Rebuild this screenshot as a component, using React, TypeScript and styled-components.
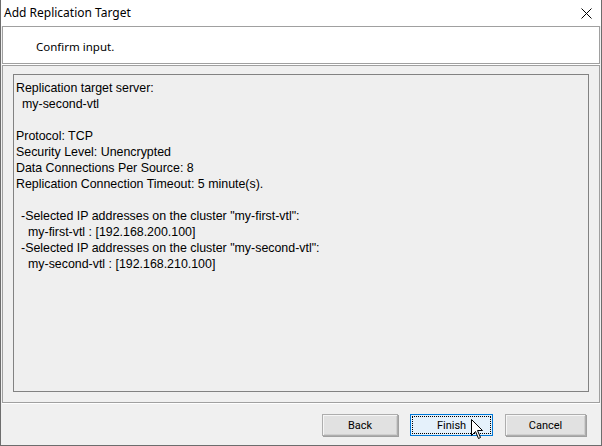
import { createGlobalStyle } from "styled-components";
import styled from "styled-components";

const GlobalStyle = createGlobalStyle`
  html, body {
    margin: 0;
    padding: 0;
    background: #ffffff;
  }
`;

const Window = styled.div`
  position: relative;
  width: 602px;
  height: 446px;
  box-sizing: border-box;
  border-left: 1px solid #6d6d6d;
  border-right: 1px solid #6d6d6d;
  border-bottom: 1px solid #6d6d6d;
  background: #f0f0f0;
  display: flex;
  flex-direction: column;
  font-family: "Liberation Sans", Arial, sans-serif;
  font-size: 12px;
  color: #000;
`;

const TitleBar = styled.div`
  height: 26px;
  background: #ffffff;
  display: flex;
  align-items: center;
  justify-content: space-between;
  padding: 0 9px 0 3px;
  font-family: "Noto Sans", "Open Sans", sans-serif;
  font-size: 12px;
  flex-shrink: 0;
`;

const Title = styled.span`
  margin-top: -1px;
`;

const Header = styled.div`
  margin: 0 1px 0 1px;
  height: 38px;
  box-sizing: border-box;
  border: 1px solid #a0a0a0;
  background: #ffffff;
  display: flex;
  align-items: center;
  padding: 3px 0 0 33px;
  box-shadow: 0 1px 0 #ffffff;
  font-family: "Noto Sans", "Open Sans", sans-serif;
  font-size: 11.5px;
  flex-shrink: 0;
`;

const Body = styled.div`
  margin: 1px 1px 0 1px;
  height: 338px;
  box-sizing: border-box;
  border: 1px solid #a0a0a0;
  box-shadow: 0 1px 0 #ffffff;
  padding: 8px 10px 10px 10px;
  display: flex;
  flex-shrink: 0;
`;

const Summary = styled.div`
  flex: 1;
  box-sizing: border-box;
  border: 1px solid #828282;
  background: #efefef;
  padding: 5px 2px;
  font-family: "Liberation Sans", Arial, sans-serif;
  font-size: 12.4px;
  line-height: 16px;
  color: #000;
`;

const Line = styled.div<{ $indent?: number }>`
  height: 16px;
  white-space: nowrap;
  padding-left: ${(p) => p.$indent ?? 0}px;
`;

const Footer = styled.div`
  flex: 1;
  display: flex;
  justify-content: flex-end;
  align-items: flex-start;
  gap: 12px;
  padding: 11px 15px 0 0;
`;

const Button = styled.button<{ $focused?: boolean; $width: number }>`
  width: ${(p) => p.$width}px;
  height: 22px;
  box-sizing: border-box;
  margin: 0;
  padding: 0;
  font-family: Roboto, "Noto Sans", sans-serif;
  font-size: 11px;
  color: #000;
  background: ${(p) => (p.$focused ? "#e5f1fb" : "#e1e1e1")};
  border: 1px solid ${(p) => (p.$focused ? "#0078d7" : "#adadad")};
  box-shadow: ${(p) =>
    p.$focused
      ? "none"
      : "inset 1px 1px 0 #f6f6f6, inset -1px -1px 0 #cfcfcf, 1px 1px 0 #a0a0a0"};
  outline: ${(p) => (p.$focused ? "1px dotted #000" : "none")};
  outline-offset: -3px;
`;

const Cursor = styled.svg`
  position: absolute;
  left: 470px;
  top: 419px;
  pointer-events: none;
`;

const CloseIcon = () => (
  <svg width="11" height="11" viewBox="0 0 11 11">
    <path d="M0.5 0.5 L10.5 10.5 M10.5 0.5 L0.5 10.5" stroke="#000" strokeWidth="1" />
  </svg>
);

const lines: { text: string; indent?: number }[] = [
  { text: "Replication target server:" },
  { text: "my-second-vtl", indent: 6 },
  { text: "" },
  { text: "Protocol: TCP" },
  { text: "Security Level: Unencrypted" },
  { text: "Data Connections Per Source: 8" },
  { text: "Replication Connection Timeout: 5 minute(s)." },
  { text: "" },
  { text: '-Selected IP addresses on the cluster "my-first-vtl":', indent: 5 },
  { text: "my-first-vtl : [192.168.200.100]", indent: 12 },
  { text: '-Selected IP addresses on the cluster "my-second-vtl":', indent: 5 },
  { text: "my-second-vtl : [192.168.210.100]", indent: 12 },
];

export default function App() {
  return (
    <>
      <GlobalStyle />
      <Window>
        <TitleBar>
          <Title>Add Replication Target</Title>
          <CloseIcon />
        </TitleBar>
        <Header>Confirm input.</Header>
        <Body>
          <Summary>
            {lines.map((l, i) => (
              <Line key={i} $indent={l.indent}>
                {l.text}
              </Line>
            ))}
          </Summary>
        </Body>
        <Footer>
          <Button $width={76}>Back</Button>
          <Button $width={83} $focused>
            Finish
          </Button>
          <Button $width={81}>Cancel</Button>
        </Footer>
        <Cursor width="13" height="20" viewBox="0 0 13 20">
          <path
            d="M0.5 0.5 L0.5 16.5 L4.5 12.5 L7.5 19.5 L9.5 18.5 L6.5 11.5 L11.5 11.5 Z"
            fill="#fff"
            stroke="#000"
            strokeWidth="1"
          />
        </Cursor>
      </Window>
    </>
  );
}
